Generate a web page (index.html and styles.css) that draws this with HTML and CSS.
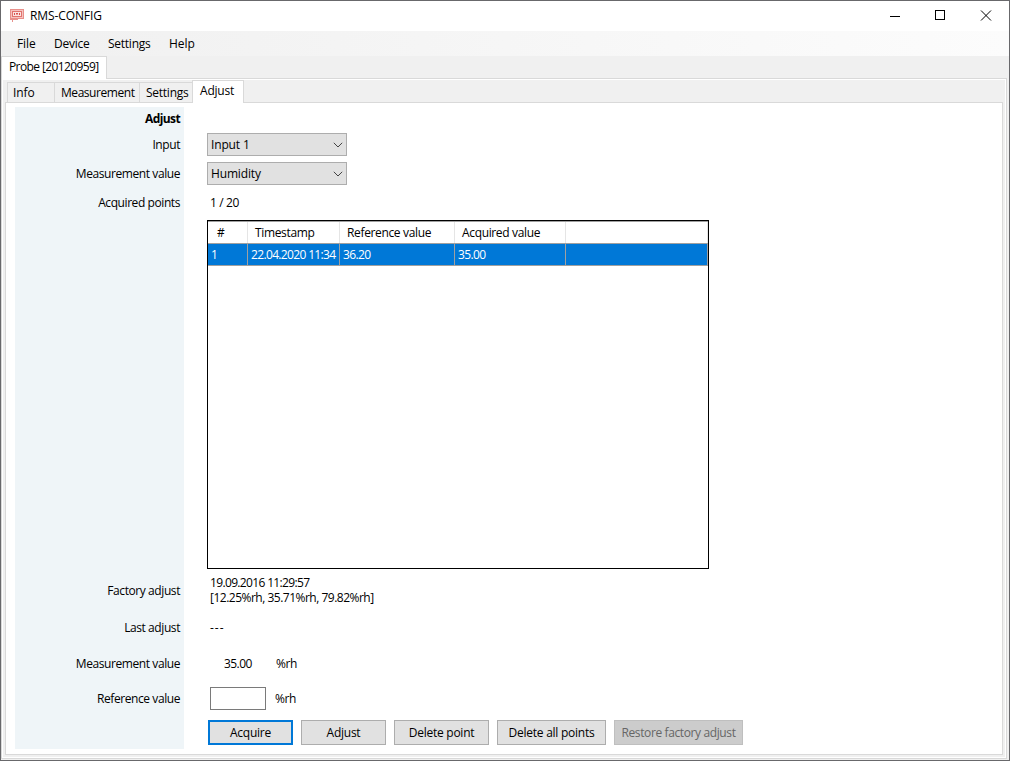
FILE: index.html
```html
<!DOCTYPE html>
<html lang="en">
<head>
    <meta charset="UTF-8">
    <title>RMS-CONFIG</title>
    <link rel="stylesheet" href="styles.css">
</head>
<body>
<div class="window">

    <!-- Title bar -->
    <div class="titlebar">
        <svg class="logo" width="14" height="14" viewBox="0 0 14 14" fill="none">
            <rect x=".5" y=".5" width="13" height="9" fill="#f7c3c0" stroke="#e8908b"/>
            <rect x="2.5" y="2.5" width="9" height="5" fill="#fbe4e2" stroke="#e0736d"/>
            <path d="M4.5 4v2M6 4.5h2M7 4v2M9.5 4v2" stroke="#d9534f"/>
            <path d="M0 10.5h8M2.5 10v3" stroke="#e8908b"/>
        </svg>
        <span class="title">RMS-CONFIG</span>
        <svg class="controls" width="104" height="12" viewBox="0 0 104 12" fill="none" stroke="#000">
            <path d="M0 6.5h10"/>
            <rect x="45.5" y=".5" width="9" height="9"/>
            <path d="M91 .5l10 10M101 .5l-10 10"/>
        </svg>
    </div>

    <!-- Menu -->
    <div class="menu">
        <span class="file">File</span>
        <span class="device">Device</span>
        <span class="settings">Settings</span>
        <span class="help">Help</span>
    </div>

    <div class="probe-tabs">
        <div class="probe-tab"><span>Probe [20120959]</span></div>
        <div class="probe-rest"></div>
    </div>

    <div class="outer-pane">
        <div class="tabs">
            <div class="tab info">Info</div>
            <div class="tab measurement">Measurement</div>
            <div class="tab setup">Settings</div>
            <div class="tab active">Adjust</div>
        </div>

        <div class="pane">
            <!-- Labels -->
            <div class="rows labels">
                <div><b>Adjust</b></div>
                <div>Input</div>
                <div>Measurement value</div>
                <div>Acquired points</div>
                <div></div>
                <div>Factory adjust</div>
                <div>Last adjust</div>
                <div>Measurement value</div>
                <div>Reference value</div>
                <div></div>
            </div>

            <!-- Values -->
            <div class="rows values">
                <div></div>
                <div>
                    <div class="select input-select"><span>Input 1</span><svg width="10" height="6" viewBox="0 0 10 6" fill="none" stroke="#444"><path d="M.8.8L5 5 9.2.8"/></svg></div>
                </div>
                <div>
                    <div class="select"><span>Humidity</span><svg width="10" height="6" viewBox="0 0 10 6" fill="none" stroke="#444"><path d="M.8.8L5 5 9.2.8"/></svg></div>
                </div>
                <div class="text">1 / 20</div>
                <div>
                    <div class="points">
                        <div class="line head">
                            <span>#</span><span>Timestamp</span><span>Reference value</span><span>Acquired value</span><span></span>
                        </div>
                        <div class="line selected">
                            <span>1</span><span class="stamp">22.04.2020 11:34</span><span class="number">36.20</span><span class="number">35.00</span><span></span>
                        </div>
                    </div>
                </div>
                <div class="text factory"><p><span class="date">19.09.2016 11:29:57</span><br>[12.25%rh, 35.71%rh, 79.82%rh]</p></div>
                <div class="text dashes">---</div>
                <div class="measured"><span class="number">35.00</span><span class="unit">%rh</span></div>
                <div class="reference"><input type="text" class="field"><span class="unit">%rh</span></div>
                <div class="buttons">
                    <button class="acquire">Acquire</button>
                    <button class="adjust">Adjust</button>
                    <button class="delete">Delete point</button>
                    <button class="delete-all">Delete all points</button>
                    <button class="restore" disabled>Restore factory adjust</button>
                </div>
            </div>
        </div>
    </div>
</div>
</body>
</html>
```
FILE: styles.css
```css
* {
    box-sizing: border-box;
}
body {
    margin: 0;
    font: 12px/16px "Open Sans", "Noto Sans", sans-serif;
    letter-spacing: -0.35px;
    color: #000;
}
.window {
    width: 1010px;
    height: 761px;
    border: 1px solid #68686b;
    background: #f0f0f0;
    overflow: hidden;
}
/* Title bar */
.titlebar {
    height: 30px;
    display: flex;
    align-items: center;
    background: #fff;
    padding-left: 9px;
}
.title {
    margin-left: 6px;
    letter-spacing: -0.1px;
}
.controls {
    margin-left: auto;
    margin-right: 15px;
}
/* Menu */
.menu {
    height: 25px;
    display: flex;
    align-items: center;
    padding: 1px 0 0 16px;
    background: linear-gradient(to right, #f0f0f0, #fcfcfc);
    letter-spacing: -0.25px;
}
.file {
    width: 37px;
    letter-spacing: -0.1px;
}
.device {
    width: 54px;
}
.settings {
    width: 61px;
}
.help {
    letter-spacing: 0;
}
/* Tabs */
.probe-tabs {
    height: 23px;
    display: flex;
}
.probe-tab {
    width: 106px;
    border: 1px solid #d9d9d9;
    border-bottom: none;
    background: #fff;
    padding: 2px 0 0 7px;
    white-space: nowrap;
    letter-spacing: -0.6px;
}
.probe-rest {
    width: 900px;
    border-bottom: 1px solid #d9d9d9;
}
.outer-pane {
    width: 1006px;
    height: 680px;
    border: solid #d9d9d9;
    border-width: 0 1px 1px 1px;
    background: #f0f0f0;
    box-shadow: inset 0 0 0 1px #fff;
    padding: 1px 3px 0;
}
.tabs {
    height: 22px;
    display: flex;
    align-items: flex-end;
    padding-left: 2px;
}
.tab {
    height: 20px;
    border: 1px solid #d9d9d9;
    border-width: 1px 0 0 1px;
    padding: 2px 0 0 5px;
    white-space: nowrap;
}
.info {
    width: 47px;
    letter-spacing: -0.1px;
}
.measurement {
    width: 85px;
    padding-left: 6px;
    letter-spacing: -0.45px;
}
.setup {
    width: 53px;
    padding-left: 6px;
    letter-spacing: -0.25px;
}
.tab.active {
    width: 52px;
    height: 23px;
    margin-bottom: -1px;
    padding-left: 7px;
    border-right-width: 1px;
    background: #fff;
    z-index: 1;
    letter-spacing: -0.2px;
}
.pane {
    width: 998px;
    height: 653px;
    display: flex;
    border: 1px solid #d9d9d9;
    background: #fff;
    padding: 4px 0 0 9px;
}
/* Form rows, the same heights in both columns */
.rows {
    display: grid;
    grid-template-rows: 24px 28px 29px 29px 355px 38px 36px 36px 34px 33px;
    height: 642px;
}
.rows > div {
    display: flex;
    align-items: center;
}
.labels {
    width: 169px;
    background: #eff5f8;
    padding-right: 4px;
    letter-spacing: -0.42px;
}
.labels > div {
    justify-content: flex-end;
}
.labels b {
    letter-spacing: -0.6px;
}
.values {
    margin-left: 23px;
}
.values .text {
    padding-left: 3px;
}
.select {
    width: 140px;
    height: 23px;
    display: flex;
    align-items: center;
    justify-content: space-between;
    border: 1px solid #adadad;
    background: #e1e1e1;
    padding: 0 3px;
    letter-spacing: -0.15px;
}
.input-select {
    margin-bottom: 1px;
}
/* Points table */
.points {
    width: 502px;
    height: 349px;
    border: 1px solid #000;
}
.line {
    display: grid;
    grid-template-columns: 40px 92px 115px 111px 142px;
    height: 22px;
    border-top: 1px solid #a0a0a0;
    white-space: nowrap;
}
.line span {
    border-right: 1px solid #e5e5e5;
    padding: 3px 0 0 7px;
}
.line span:first-child {
    padding-left: 9px;
}
.line.selected {
    height: 23px;
    border-bottom: 1px solid #a0a0a0;
    background: #0078d7;
    color: #fff;
}
.line.selected span {
    border-color: #a0a0a0;
    padding: 3px 0 0 3px;
}
.line.selected .number,
.line.selected .stamp {
    letter-spacing: -0.65px;
}
.number {
    letter-spacing: -0.55px;
}
.factory {
    line-height: 15px;
    letter-spacing: -0.5px;
}
.factory p {
    margin: 0 0 2px;
}
.date {
    letter-spacing: -0.65px;
}
.dashes {
    letter-spacing: 1px;
}
.measured .number {
    width: 52px;
    margin-left: 17px;
}
.field {
    width: 56px;
    height: 23px;
    margin: 0 9px 1px 3px;
    border: 1px solid #7a7a7a;
    background: #fff;
}
/* Buttons */
.buttons {
    gap: 8px;
    padding-left: 1px;
}
button {
    height: 25px;
    padding: 0;
    border: 1px solid #adadad;
    background: #e1e1e1;
    color: #000;
    font: inherit;
    letter-spacing: -0.25px;
}
.acquire {
    width: 85px;
    border: 2px solid #0078d7;
}
.adjust {
    width: 85px;
}
.delete {
    width: 95px;
}
.delete-all {
    width: 109px;
}
.restore {
    width: 129px;
    border-color: #bfbfbf;
    background: #ccc;
    color: #666;
    letter-spacing: -0.38px;
}
```
